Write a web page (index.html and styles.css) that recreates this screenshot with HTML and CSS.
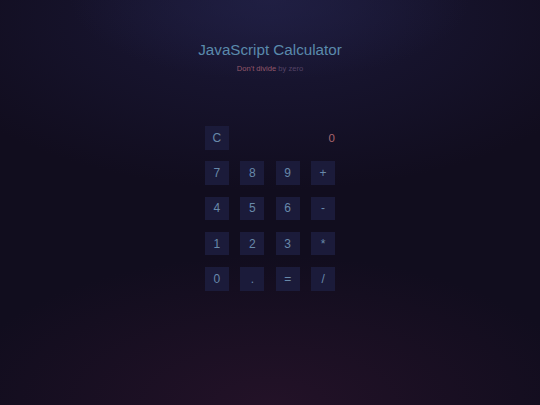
FILE: index.html
```html
<!DOCTYPE html>
<html lang="en">
<head>
<meta charset="utf-8">
<title>JavaScript Calculator</title>
<link rel="stylesheet" href="styles.css">
</head>
<body>
  <main class="page">
    <header class="head">
      <h1 class="title">JavaScript Calculator</h1>
      <p class="subtitle"><span class="warn">Don't divide</span> by zero</p>
    </header>
    <section class="calc">
      <button class="key">C</button>
      <div class="display">0</div>
      <button class="key">7</button>
      <button class="key">8</button>
      <button class="key">9</button>
      <button class="key">+</button>
      <button class="key">4</button>
      <button class="key">5</button>
      <button class="key">6</button>
      <button class="key">-</button>
      <button class="key">1</button>
      <button class="key">2</button>
      <button class="key">3</button>
      <button class="key">*</button>
      <button class="key">0</button>
      <button class="key">.</button>
      <button class="key">=</button>
      <button class="key">/</button>
    </section>
  </main>
</body>
</html>
```

FILE: styles.css
```css
html, body {
  margin: 0;
  padding: 0;
  height: 100%;
}

body {
  font-family: "Liberation Sans", Arial, sans-serif;
  background-color: #110d1e;
  background-image:
    radial-gradient(ellipse 200px 80px at 270px 0px, rgba(34, 34, 72, 0.7), rgba(34, 34, 72, 0) 100%),
    radial-gradient(ellipse 360px 170px at 270px 20px, rgba(28, 26, 60, 0.85), rgba(28, 26, 60, 0) 100%),
    radial-gradient(ellipse 320px 150px at 270px 405px, rgba(36, 18, 40, 0.95), rgba(36, 18, 40, 0) 100%);
  overflow: hidden;
}

.page {
  display: flex;
  flex-direction: column;
  align-items: center;
  padding-top: 41px;
}

.head {
  display: flex;
  flex-direction: column;
  align-items: center;
}

.title {
  margin: 0;
  font-size: 15.2px;
  line-height: 18px;
  font-weight: normal;
  color: #5a8aac;
}

.subtitle {
  margin: 5px 0 0;
  font-size: 7.6px;
  line-height: 9px;
  color: #554466;
}

.warn {
  color: #94586a;
}

.calc {
  margin-top: 53px;
  display: grid;
  grid-template-columns: repeat(4, 23.7px);
  grid-auto-rows: 23.5px;
  column-gap: 11.7px;
  row-gap: 11.8px;
}

.key {
  margin: 0;
  padding: 0;
  border: none;
  background: #1b1b3a;
  color: #6889aa;
  font-family: "Liberation Sans", Arial, sans-serif;
  font-size: 12px;
  line-height: 1;
  display: flex;
  align-items: center;
  justify-content: center;
}

.display {
  grid-column: 2 / 5;
  display: flex;
  align-items: center;
  justify-content: flex-end;
  color: #a8646e;
  font-size: 11.5px;
}
```
